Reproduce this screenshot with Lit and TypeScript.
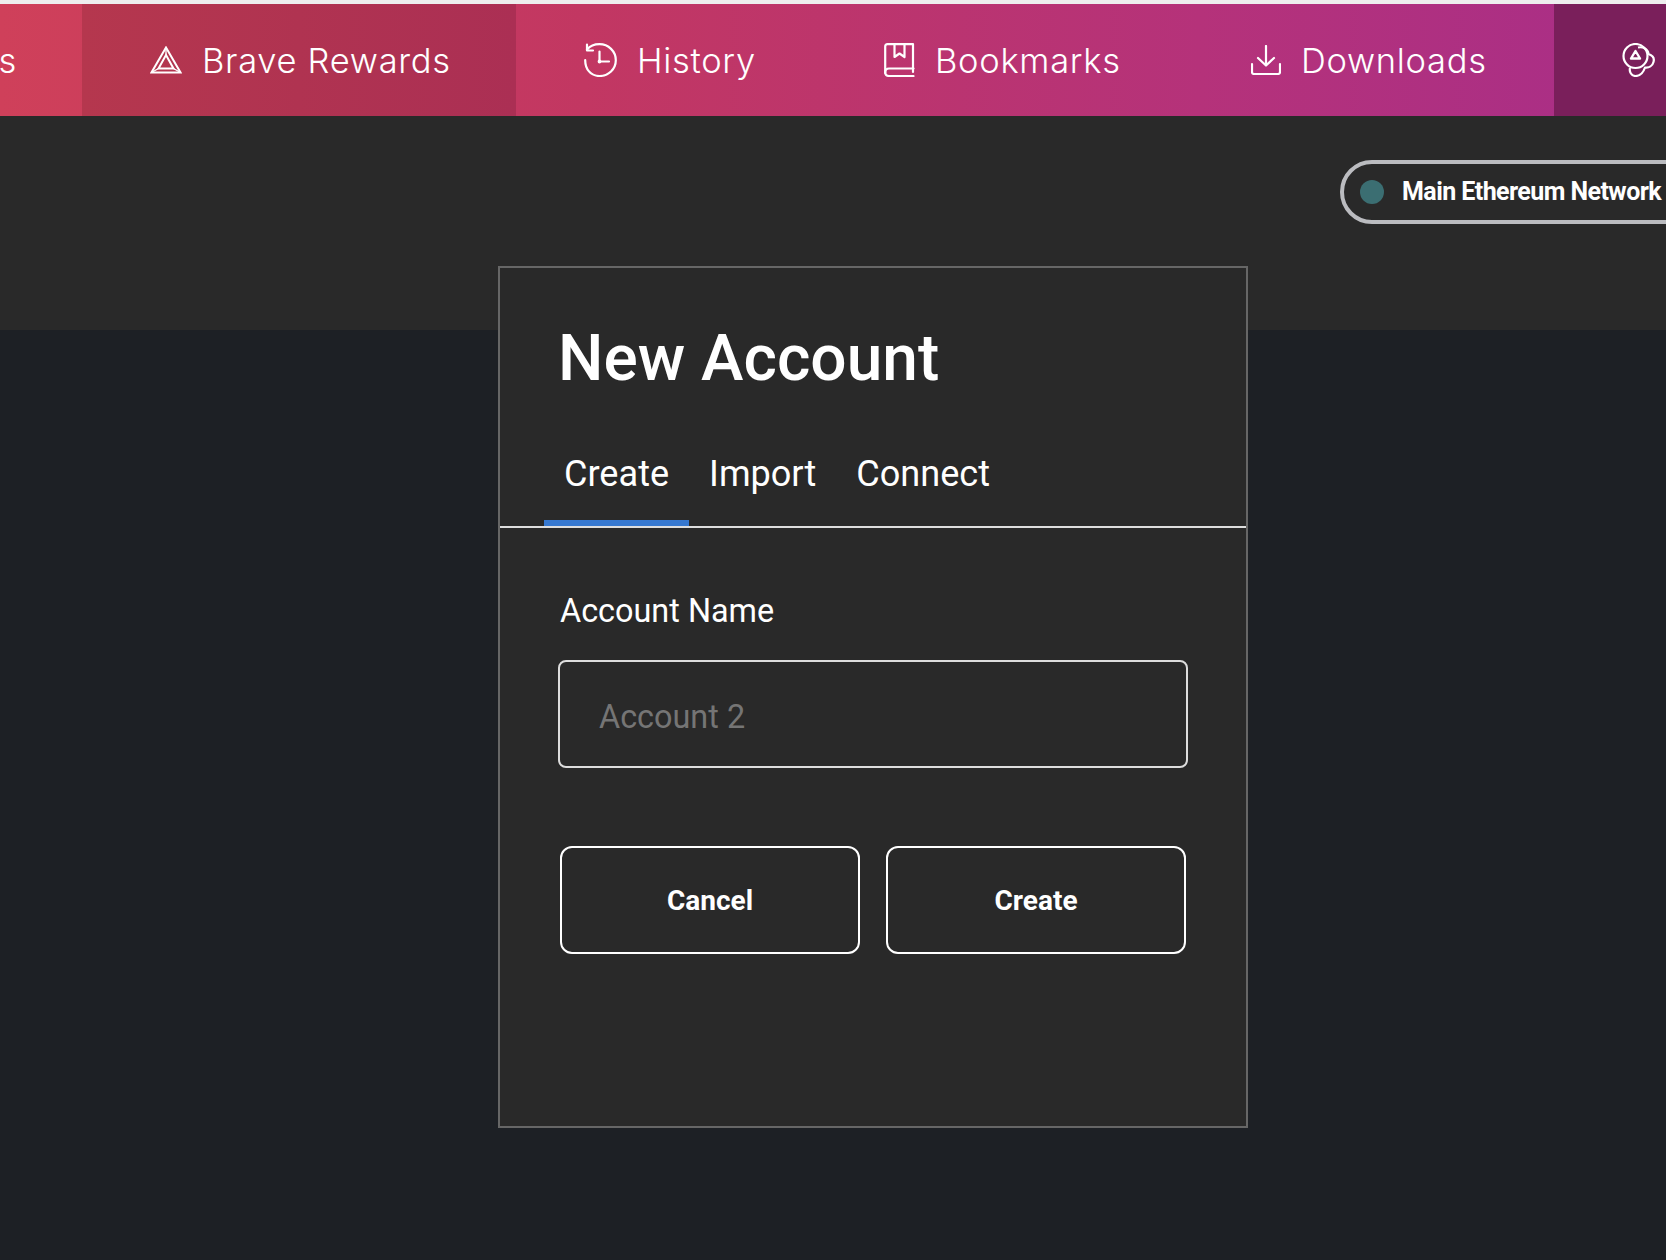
import { LitElement, html, css } from "lit";
import { customElement } from "lit/decorators.js";

const rewards = html`<svg class="ic" width="32" height="28" viewBox="0 0 32 28" fill="none" stroke="#fff" stroke-width="2" stroke-linejoin="miter"><path d="M16 1.500 30.500 26.500H1.500Z"/><path d="M16 9 23.500 22.500H8.500Z"/><path d="M16 1.500V9M1.500 26.500 8.500 22.500M30.500 26.500 23.500 22.500" stroke-width="1.300"/></svg>`;
const history = html`<svg class="ic" width="33" height="34" viewBox="0 0 33 34" fill="none" stroke="#fff" stroke-width="2.200" stroke-linecap="round" stroke-linejoin="round"><path d="M3 6.500C6 3 10.500 1.200 15.500 1.200 24.500 1.200 31.800 8.300 31.800 17.200S24.500 33 15.500 33 1.200 26 1.200 17.200"/><path d="M3 1.500V7.500H9"/><path d="M15.500 8.500V18.500H25"/><circle cx="15.500" cy="18.500" r=".8" fill="#fff"/></svg>`;
const bookmarks = html`<svg class="ic" width="31" height="34" viewBox="0 0 31 34" fill="none" stroke="#fff" stroke-width="2.200" stroke-linecap="round" stroke-linejoin="round"><path d="M29 25.500V1.200H3.500Q1.200 1.200 1.200 3.500V30"/><path d="M29.500 25.500H5Q1.200 25.500 1.200 29.200T5 33H29.500"/><path d="M29 25.500V29"/><path d="M10.500 1.500V14L15.500 10.500 20.500 14V1.500"/></svg>`;
const downloads = html`<svg class="ic" width="30" height="30" viewBox="0 0 30 30" fill="none" stroke="#fff" stroke-width="2.200" stroke-linecap="round" stroke-linejoin="round"><path d="M15 1V20"/><path d="M7 13 15 20.500 23 13"/><path d="M1 19V27Q1 29 3 29H27Q29 29 29 27V19"/></svg>`;
const sync = html`<svg class="ic" width="33" height="34" viewBox="0 0 33 34" fill="none" stroke="#fff" stroke-width="2.200" stroke-linejoin="round"><circle cx="13.500" cy="13" r="12"/><path d="M16 4.500C21 3.500 26 6 26.500 11 31 12.500 32.500 15.500 31.500 19 30.500 23 27 25 23 24.500 21.500 29 18 33 13.500 33 9.500 33 7 29 8 25"/><path d="M13.500 8 18 15.500H9Z" stroke-width="2.400"/></svg>`;

@customElement("app-root")
export class AppRoot extends LitElement {
  static styles = css`
    :host {
      display: block;
      width: 1666px;
      height: 1260px;
      overflow: hidden;
      background: #1d2025;
      font-family: Roboto, "Liberation Sans", sans-serif;
      color: #fff;
      border-top: 4px solid #eeeeee;
      box-sizing: border-box;
    }
    .nav {
      display: grid;
      grid-template-columns: 82px 434px 300px 367px 371px 1fr;
      height: 112px;
      background: linear-gradient(90deg, #cf405a 0%, #c23762 35%, #b5327a 72%, #a82e88 100%);
      font-family: Inter, "Open Sans", sans-serif;
      font-weight: 300;
      font-size: 34.500px;
      letter-spacing: 0.700px;
    }
    .item {
      display: flex;
      align-items: center;
      gap: 20px;
      padding-left: 68px;
      white-space: nowrap;
      min-width: 0;
    }
    .ic { flex: none; display: block; }
    .first {
      padding: 0;
      justify-content: flex-end;
      overflow: hidden;
    }
    .first span { margin-right: 65px; }
    .active {
      background: linear-gradient(90deg, #b5374e 0%, #ab2f54 100%);
    }
    .last {
      background: #7a1f5b;
    }
    .band {
      height: 214px;
      background: #292929;
      display: flex;
      padding: 44px 0 0 1340px;
      box-sizing: border-box;
    }
    .pill {
      flex: none;
      height: 64px;
      width: 500px;
      box-sizing: border-box;
      border: 4px solid #bbbcc0;
      border-radius: 32px;
      display: flex;
      align-items: center;
      gap: 18px;
      padding: 0 0 2px 16px;
      font-weight: 700;
      font-size: 25px;
      letter-spacing: -0.570px;
    }
    .dot { width: 24px; height: 24px; border-radius: 50%; background: #3b6e72; margin-top: 2px; }
    .modal {
      margin: -64px 0 0 498px;
      width: 750px;
      height: 862px;
      box-sizing: border-box;
      background: #292929;
      border: 2px solid #666;
      display: flex;
      flex-direction: column;
    }
    h1 {
      margin: 53px 0 0 58px;
      font-size: 64px;
      line-height: 76px;
      font-weight: 500;
    }
    .tabs {
      display: flex;
      margin-top: 35px;
      padding-left: 44px;
      border-bottom: 2px solid #dddddd;
      height: 94px;
      box-sizing: content-box;
      font-size: 36.100px;
    }
    .tab {
      padding: 0 20px;
      height: 94px;
      box-sizing: border-box;
      line-height: 84px;
    }
    .tab.on { border-bottom: 6px solid #3678d0; }
    label {
      display: block;
      margin: 63px 0 0 60px;
      font-size: 32.400px;
      line-height: 40px;
    }
    .input {
      margin: 29px 0 0 58px;
      width: 630px;
      height: 108px;
      box-sizing: border-box;
      border: 2px solid #dddddd;
      border-radius: 8px;
      padding: 6px 38px 0 39px;
      display: flex;
      align-items: center;
      font-size: 32.400px;
      color: #757575;
    }
    .btns {
      display: flex;
      gap: 26px;
      margin: 78px 0 0 60px;
    }
    .btn {
      width: 300px;
      height: 108px;
      box-sizing: border-box;
      border: 2px solid #fff;
      border-radius: 12px;
      display: flex;
      align-items: center;
      justify-content: center;
      font-size: 28px;
      font-weight: 700;
    }
  `;

  render() {
    return html`
      <nav class="nav">
        <div class="item first"><span>Settings</span></div>
        <div class="item active">${rewards}<span>Brave Rewards</span></div>
        <div class="item">${history}<span>History</span></div>
        <div class="item">${bookmarks}<span>Bookmarks</span></div>
        <div class="item">${downloads}<span>Downloads</span></div>
        <div class="item last">${sync}</div>
      </nav>
      <div class="band">
        <div class="pill"><span class="dot"></span><span>Main Ethereum Network</span></div>
      </div>
      <section class="modal">
        <h1>New Account</h1>
        <div class="tabs">
          <div class="tab on">Create</div>
          <div class="tab">Import</div>
          <div class="tab">Connect</div>
        </div>
        <label>Account Name</label>
        <div class="input">Account 2</div>
        <div class="btns">
          <div class="btn">Cancel</div>
          <div class="btn">Create</div>
        </div>
      </section>
    `;
  }
}
